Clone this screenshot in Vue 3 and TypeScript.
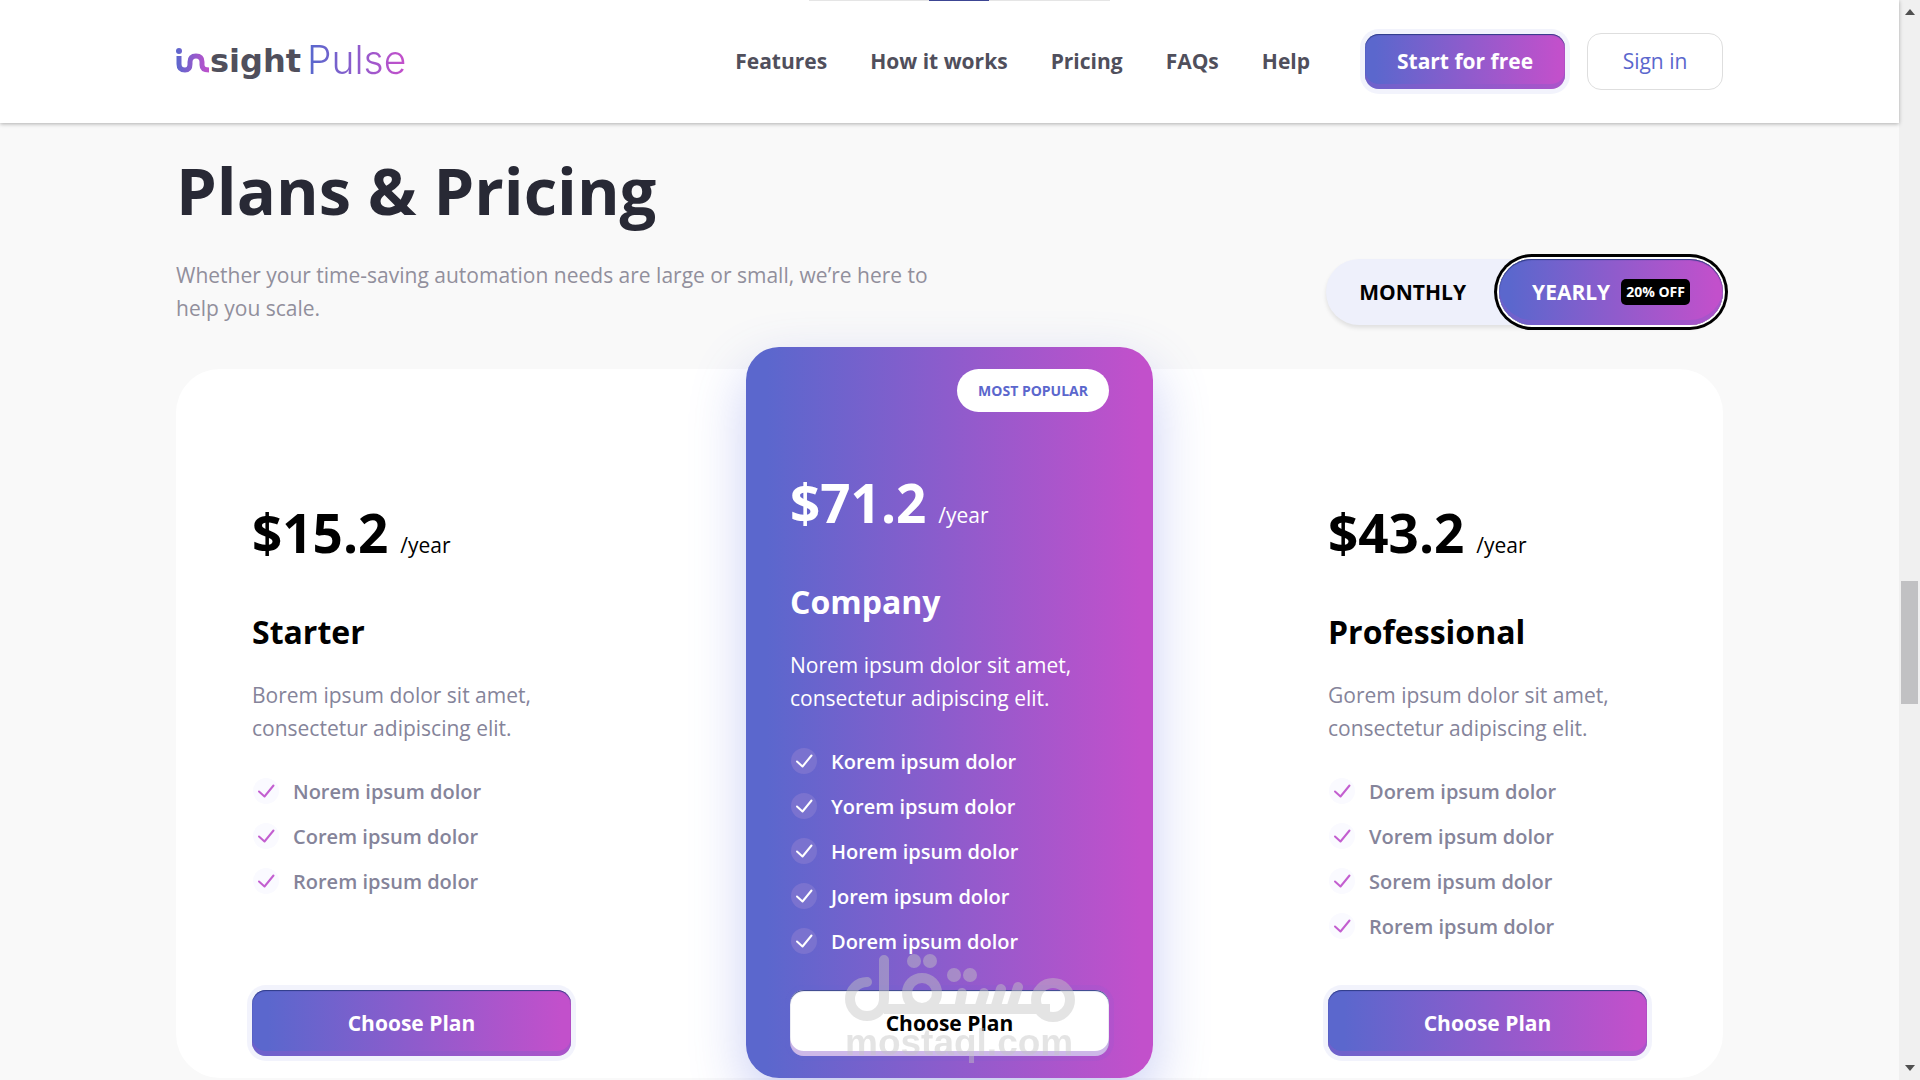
<script setup lang="ts">
import { ref } from 'vue'

interface Plan {
  name: string
  price: string
  description: string
  features: string[]
  popular?: boolean
}

const links: string[] = ['Features', 'How it works', 'Pricing', 'FAQs', 'Help']
const billing = ref<'monthly' | 'yearly'>('yearly')

const plans: Plan[] = [
  {
    name: 'Starter',
    price: '$15.2',
    description: 'Borem ipsum dolor sit amet, consectetur adipiscing elit.',
    features: ['Norem ipsum dolor', 'Corem ipsum dolor', 'Rorem ipsum dolor'],
  },
  {
    name: 'Company',
    price: '$71.2',
    description: 'Norem ipsum dolor sit amet, consectetur adipiscing elit.',
    features: [
      'Korem ipsum dolor',
      'Yorem ipsum dolor',
      'Horem ipsum dolor',
      'Jorem ipsum dolor',
      'Dorem ipsum dolor',
    ],
    popular: true,
  },
  {
    name: 'Professional',
    price: '$43.2',
    description: 'Gorem ipsum dolor sit amet, consectetur adipiscing elit.',
    features: ['Dorem ipsum dolor', 'Vorem ipsum dolor', 'Sorem ipsum dolor', 'Rorem ipsum dolor'],
  },
]
</script>

<template>
  <div class="page">
    <div class="content">
      <header class="header">
        <div class="progress"><span class="progress-active"></span></div>
        <div class="container header-row">
          <a class="logo" href="#" aria-label="insight Pulse">
            <svg class="logo-mark" width="34" height="30" viewBox="0 0 34 30" aria-hidden="true">
              <defs>
                <linearGradient id="mark" gradientUnits="userSpaceOnUse" x1="0" y1="0" x2="34" y2="0">
                  <stop offset="0" stop-color="#5b67cd" />
                  <stop offset="1" stop-color="#c250cb" />
                </linearGradient>
              </defs>
              <circle cx="3" cy="4" r="3" fill="url(#mark)" />
              <path
                d="M3 9V17Q3 23 9 23Q14 23 14 17V15Q14 9 20 9Q26 9 26 15V18Q26 23 33 23"
                fill="none"
                stroke="url(#mark)"
                stroke-width="5"
              />
            </svg>
            <span class="logo-bold">sight</span>
            <span class="logo-light">Pulse</span>
          </a>
          <nav class="nav">
            <a v-for="link in links" :key="link" class="nav-link" href="#">{{ link }}</a>
          </nav>
          <div class="actions">
            <button class="btn btn-start" type="button">Start for free</button>
            <button class="btn-signin" type="button">Sign in</button>
          </div>
        </div>
      </header>

      <main class="container main">
        <h1 class="title">Plans &amp; Pricing</h1>
        <div class="intro">
          <p class="lead">
            Whether your time-saving automation needs are large or small, we’re here to help you scale.
          </p>
          <div class="toggle">
            <button
              class="toggle-btn"
              :class="{ active: billing === 'monthly' }"
              type="button"
              @click="billing = 'monthly'"
            >
              MONTHLY
            </button>
            <button
              class="toggle-btn"
              :class="{ active: billing === 'yearly' }"
              type="button"
              @click="billing = 'yearly'"
            >
              YEARLY <span class="off">20% OFF</span>
            </button>
          </div>
        </div>

        <section class="plans">
          <article v-for="plan in plans" :key="plan.name" class="plan" :class="{ popular: plan.popular }">
            <span v-if="plan.popular" class="tag">MOST POPULAR</span>
            <p class="price">
              <strong class="amount">{{ plan.price }}</strong>
              <span class="period">/year</span>
            </p>
            <h2 class="name">{{ plan.name }}</h2>
            <p class="description">{{ plan.description }}</p>
            <ul class="features">
              <li v-for="feature in plan.features" :key="feature" class="feature">
                <svg class="check" width="28" height="28" viewBox="0 0 28 28" aria-hidden="true">
                  <circle class="check-bg" cx="14" cy="13" r="13" />
                  <path class="check-line" d="M7 13.5L12.5 18.5L21.5 7.5" />
                </svg>
                {{ feature }}
              </li>
            </ul>
            <button class="btn btn-plan" type="button">Choose Plan</button>
            <div v-if="plan.popular" class="watermark">
              <svg width="230" height="70" viewBox="0 0 230 70" aria-hidden="true">
                <g fill="none" stroke="#c5c5c5" stroke-width="10" stroke-linecap="round">
                  <path d="M39 6V45A17 17 0 1 1 22 28" />
                  <path d="M39 55H205" stroke-linecap="butt" />
                  <circle cx="77" cy="39" r="15" />
                  <path d="M117 39L114 55M139 39L134 55M156 35L150 55M173 33L166 55" />
                  <circle cx="208" cy="46" r="17" />
                </g>
                <g fill="#c5c5c5">
                  <circle cx="69" cy="7" r="7" />
                  <circle cx="85" cy="7" r="7" />
                  <circle cx="109" cy="21" r="7" />
                  <circle cx="125" cy="21" r="7" />
                </g>
              </svg>
              <span class="watermark-text">mostaql.com</span>
            </div>
          </article>
        </section>
      </main>
    </div>

    <div class="scrollbar" aria-hidden="true">
      <svg width="10" height="6" viewBox="0 0 10 6"><path d="M0 6L5 0L10 6Z" fill="#505050" /></svg>
      <span class="track-before"></span>
      <span class="thumb"></span>
      <span class="track-after"></span>
      <svg width="10" height="6" viewBox="0 0 10 6"><path d="M0 0L5 6L10 0Z" fill="#505050" /></svg>
    </div>
  </div>
</template>

<style>
body {
  margin: 0;
  background: #f9f9f9;
}
</style>

<style scoped>
.page {
  --brand: linear-gradient(90deg, #5b67cd 5%, #c250cb 97%);
  display: grid;
  grid-template-columns: minmax(0, 1fr) 21px;
  min-height: 100vh;
  overflow: hidden;
  font-family: 'Open Sans', 'Noto Sans', sans-serif;
  font-size: 21px;
  line-height: 33px;
  color: #000;
}

.page *,
.page *::before {
  box-sizing: border-box;
}

button {
  border: 0;
  font: inherit;
  cursor: pointer;
}

a {
  text-decoration: none;
}

.container {
  width: min(100% - 64px, 1547px);
  margin: 0 auto;
}

.header {
  position: relative;
  background: #fff;
  box-shadow: 0 1px 4px rgba(0, 0, 0, 0.3);
}

.progress {
  position: absolute;
  top: 0;
  left: 50%;
  width: 301px;
  height: 1px;
  margin-left: -141px;
  background: #e5e5e5;
}

.progress-active {
  display: block;
  width: 60px;
  height: 1px;
  margin-left: 120px;
  background: #3c4593;
}

.header-row {
  display: flex;
  align-items: center;
  height: 123px;
}

.logo {
  display: flex;
  align-items: center;
  margin-right: auto;
}

.logo-bold {
  color: #504f5c;
  font-family: 'DejaVu Sans', sans-serif;
  font-size: 32px;
  font-weight: 700;
}

.logo-light {
  margin-left: 6px;
  padding-bottom: 4px;
  background: var(--brand);
  background-clip: text;
  color: transparent;
  font-family: Inter, sans-serif;
  font-size: 39px;
  font-weight: 300;
  line-height: 44px;
}

.nav {
  display: flex;
  gap: 43px;
  margin-right: 55px;
}

.nav-link {
  color: #504f5c;
  font-weight: 700;
}

.actions {
  display: flex;
  align-items: center;
  gap: 22px;
}

.btn {
  border-radius: 14px;
  background: var(--brand);
  box-shadow:
    inset 0 1px 1px #2f3b88,
    inset 0 -5px 0 rgba(139, 90, 202, 0.43),
    0 0 0 5px rgba(88, 103, 221, 0.08);
  color: #fff;
  font-weight: 700;
}

.btn-start {
  height: 55px;
  min-width: 200px;
  padding: 0 28px;
}

.btn-signin {
  height: 57px;
  min-width: 136px;
  border: 1px solid #dedede;
  border-radius: 14px;
  background: #fff;
  color: #5b67cd;
}

.main {
  padding-top: 27px;
}

.title {
  margin: 0 0 29px;
  color: #282935;
  font-size: 65px;
  font-weight: 700;
  line-height: 80px;
}

.intro {
  display: flex;
  align-items: center;
  justify-content: space-between;
  margin-bottom: 44px;
}

.lead {
  width: 770px;
  margin: 0;
  color: #918f9c;
}

.toggle {
  display: flex;
  border-radius: 33px;
  background: #eef0fb;
  box-shadow: 0 3px 4px rgba(0, 0, 0, 0.1);
}

.toggle-btn {
  display: flex;
  align-items: center;
  gap: 11px;
  height: 66px;
  padding: 0 33px;
  border-radius: 33px;
  background: transparent;
  color: #000;
  font-weight: 700;
}

.toggle-btn.active {
  background: var(--brand);
  box-shadow:
    inset 0 1px 1px #2f3b88,
    inset 0 -5px 0 rgba(139, 90, 202, 0.43),
    0 0 0 2px #fff,
    0 0 0 5px #000;
  color: #fff;
}

.off {
  padding: 0 5px;
  border-radius: 5px;
  background: #000;
  font-size: 14px;
  line-height: 26px;
}

.plans {
  display: flex;
  justify-content: space-between;
  padding: 0 32px;
  border-radius: 44px;
  background: #fff;
}

.plan {
  display: flex;
  flex-direction: column;
  width: 407px;
  padding: 131px 44px 22px;
}

.plan.popular {
  position: relative;
  margin-top: -22px;
  padding-top: 22px;
  border-radius: 33px;
  background: var(--brand);
  box-shadow: 0 22px 55px rgba(88, 103, 221, 0.32);
  color: #fff;
}

.tag {
  align-self: flex-end;
  margin-bottom: 58px;
  padding: 5px 21px;
  border-radius: 22px;
  background: #fff;
  color: #5b67cd;
  font-size: 14px;
  font-weight: 700;
}

.price {
  display: flex;
  align-items: baseline;
  gap: 12px;
  margin: 0 0 44px;
}

.amount {
  font-size: 53px;
  font-weight: 700;
  line-height: 66px;
}

.name {
  margin: 0 0 25px;
  font-size: 32px;
  font-weight: 700;
  line-height: 44px;
}

.description {
  margin: 0 0 33px;
  color: #85849a;
}

.features {
  display: flex;
  flex-direction: column;
  gap: 17px;
  margin: 0 0 34px;
  padding: 0;
  list-style: none;
}

.feature {
  display: flex;
  align-items: center;
  gap: 13px;
  color: #85849a;
  font-size: 20px;
  font-weight: 600;
  line-height: 28px;
}

.popular .description,
.popular .feature {
  color: #fff;
}

.check-bg {
  fill: #fafaff;
}

.check-line {
  fill: none;
  stroke: #c35fd0;
  stroke-width: 2;
  stroke-linecap: round;
  stroke-linejoin: round;
}

.popular .check-bg {
  fill: #7a72cf;
}

.popular .check-line {
  stroke: #fff;
}

.btn-plan {
  height: 66px;
  margin-top: auto;
}

.popular .btn-plan {
  background: #fff;
  color: #000;
}

.watermark {
  position: absolute;
  bottom: 16px;
  left: 99px;
  display: flex;
  flex-direction: column;
  width: 230px;
  opacity: 0.45;
  pointer-events: none;
}

.watermark-text {
  color: #c5c5c5;
  font-family: 'Liberation Sans', sans-serif;
  font-size: 37px;
  font-weight: 700;
  line-height: 38px;
}

.scrollbar {
  display: flex;
  flex-direction: column;
  align-items: center;
  padding: 9px 0;
  background: #f0f0f0;
}

.track-before {
  flex: 566;
}

.thumb {
  flex: 123;
  width: 17px;
  background: #c1c1c3;
}

.track-after {
  flex: 361;
}
</style>
